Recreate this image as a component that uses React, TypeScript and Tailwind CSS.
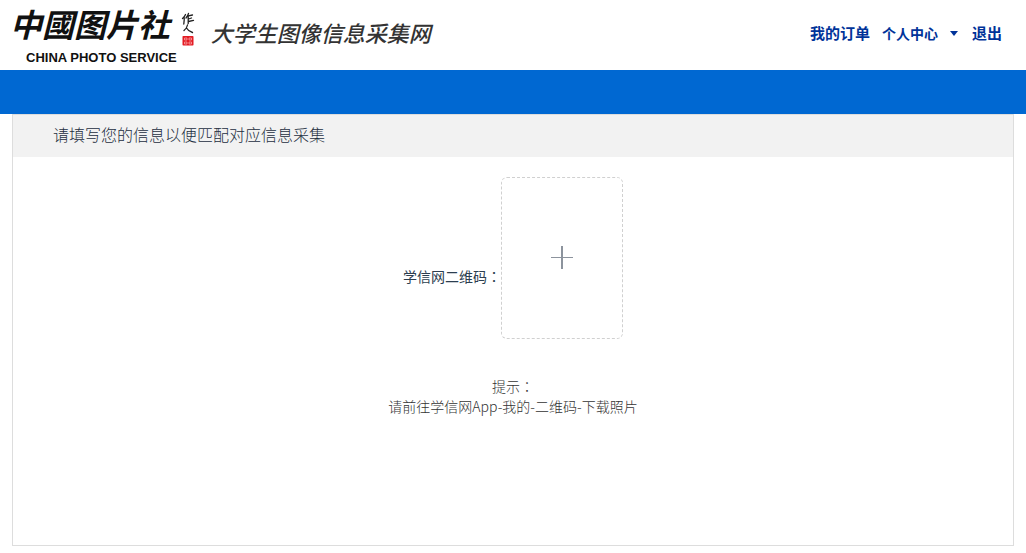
import React from "react";

function Logo() {
  return (
    <a href="#home" className="flex items-start pl-2.5 text-[#111111]">
      <span className="flex flex-col items-start">
        <span className="text-[32px] leading-[46px] font-bold whitespace-nowrap italic">中國图片社</span>
        <span className="pl-4 font-['Liberation_Sans',Arial,sans-serif] text-[13px] leading-6 font-bold whitespace-nowrap">
          CHINA PHOTO SERVICE
        </span>
      </span>
      <svg aria-hidden="true" viewBox="0 0 14 36" className="ml-1 mt-3 h-9 w-3.5" fill="none">
        <g stroke="#222222" strokeLinecap="round" strokeLinejoin="round" strokeWidth="1.3">
          <path d="M4.5 2.5Q3.5 5 1.5 6.5M3.2 5.5Q3.4 8 2.8 12M7.5 1.5Q6.8 4 5 6M6.2 4.2L11.5 3M7.2 4.5V11.5M7.5 7L10.5 6M7.5 9.5L12.5 8.4" />
          <path d="M6.5 13Q6 16 3 18.5M5.5 16Q7.5 19.5 11.5 20.5" />
        </g>
        <rect x="1.5" y="24" width="11" height="9.5" rx="0.8" fill="#e31b23" />
        <path d="M3.5 26H6V28H3.5ZM8 26H10.5V28H8ZM3.5 30H6V32H3.5ZM8 30H10.5V32H8Z" stroke="#ffc9c9" strokeWidth="0.6" />
      </svg>
      <span className="ml-4 mt-4 text-[22px] leading-8 font-medium italic whitespace-nowrap text-[#333333]">
        大学生图像信息采集网
      </span>
    </a>
  );
}

function Nav() {
  return (
    <nav className="flex items-center pr-6 text-[15px] leading-5 font-bold whitespace-nowrap text-[#003399]">
      <a href="#orders">我的订单</a>
      <button type="button" className="ml-3 flex items-center gap-3 text-sm font-bold">
        个人中心
        <svg aria-hidden="true" viewBox="0 0 8 5" className="h-[5px] w-2" fill="currentColor">
          <path d="M0 0H8L4 5Z" />
        </svg>
      </button>
      <a href="#logout" className="ml-3.5">退出</a>
    </nav>
  );
}

function Colon() {
  return <span lang="zh-TW" className="font-['Noto_Sans_CJK_TC',sans-serif]">：</span>;
}

export default function App() {
  return (
    <div lang="zh-CN" className="bg-white pb-2 font-['Noto_Sans_CJK_SC',sans-serif] text-[#2c3e50]">
      <header className="flex h-[70px] items-start justify-between">
        <Logo />
        <div className="pt-[23px]">
          <Nav />
        </div>
      </header>
      <div className="h-11 bg-[#0068d2]" />
      <main className="mx-3 border border-[#dddddd] pb-[129px]">
        <h1 className="bg-[#f2f2f2] pt-[7px] pb-[11px] pl-10 text-base leading-6 font-light text-[#1c2e40]">
          请填写您的信息以便匹配对应信息采集
        </h1>
        <div className="flex items-start justify-center pt-5">
          <label htmlFor="qr" className="pt-[89px] text-sm leading-5">
            学信网二维码<Colon />
          </label>
          <label
            htmlFor="qr"
            className="flex h-[162px] w-[122px] cursor-pointer items-center justify-center rounded-md border border-dashed border-[#d0d0d0]"
          >
            <svg aria-hidden="true" viewBox="0 0 22 24" className="h-6 w-[22px]" fill="#8c939d">
              <rect x="0" y="11" width="22" height="1" />
              <rect x="10" y="0" width="2" height="23" />
            </svg>
            <input id="qr" type="file" accept="image/*" className="sr-only" />
          </label>
        </div>
        <div className="pt-[37px] text-center text-sm leading-5 font-light text-[#333333]">
          <p>提示<Colon /></p>
          <p>请前往学信网App-我的-二维码-下载照片</p>
        </div>
      </main>
    </div>
  );
}
